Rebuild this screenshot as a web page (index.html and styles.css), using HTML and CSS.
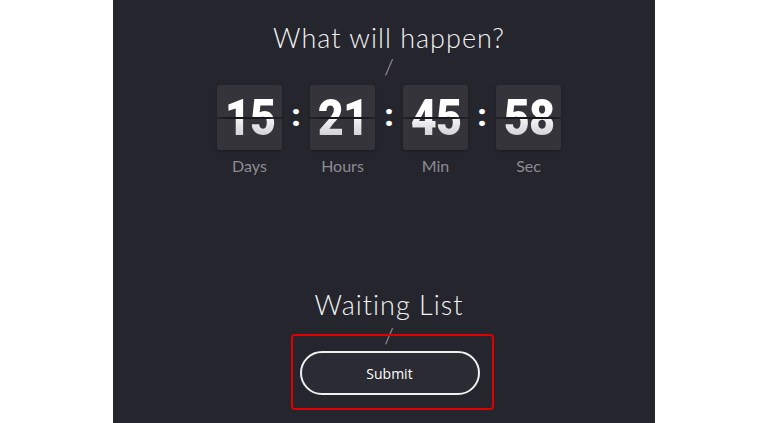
FILE: index.html
```html
<!DOCTYPE html>
<html>
<head>
  <title>Countdown</title>
  <link rel="stylesheet" href="styles.css">
</head>
<body>
  <div class="panel">
    <h1 class="title">What will happen?</h1>
    <div class="slash">/</div>

    <div class="countdown">
      <div class="unit">
        <div class="tile"><span>15</span></div>
        <div class="label">Days</div>
      </div>
      <div class="colon">:</div>
      <div class="unit">
        <div class="tile"><span>21</span></div>
        <div class="label">Hours</div>
      </div>
      <div class="colon">:</div>
      <div class="unit">
        <div class="tile"><span>45</span></div>
        <div class="label">Min</div>
      </div>
      <div class="colon">:</div>
      <div class="unit">
        <div class="tile"><span>58</span></div>
        <div class="label">Sec</div>
      </div>
    </div>

    <h2 class="title waiting">Waiting List</h2>
    <div class="slash small">/</div>

    <div class="highlight">
      <button class="submit-btn" type="button">Submit</button>
    </div>
  </div>
</body>
</html>
```

FILE: styles.css
```css
body {
  margin: 0;
  background-color: #fff;
  font-family: "Open Sans", Arial, sans-serif;
}

.panel {
  width: 542px;
  height: 423px;
  margin-left: 113px;
  background-color: #25252d;
  display: flex;
  flex-direction: column;
  align-items: center;
  box-sizing: border-box;
  padding-top: 22px;
  padding-left: 10px;
}

.title {
  margin: 0;
  color: #f2f2f2;
  font-family: "Lato", sans-serif;
  font-weight: 300;
  font-size: 27px;
  line-height: 32px;
  letter-spacing: 1px;
}

.slash {
  color: #b4b4b8;
  font-family: "Lato", sans-serif;
  font-weight: 300;
  font-size: 22px;
  line-height: 22px;
  height: 22px;
  margin-top: 2px;
}

.countdown {
  display: flex;
  align-items: flex-start;
  margin-top: 7px;
}

.unit {
  display: flex;
  flex-direction: column;
  align-items: center;
}

.tile {
  width: 65px;
  height: 65px;
  background-color: #34343a;
  border-radius: 3px;
  position: relative;
  display: flex;
  align-items: center;
  justify-content: center;
  box-shadow: 0 1px 3px rgba(0, 0, 0, 0.3);
}

.tile::after {
  content: "";
  position: absolute;
  left: 0;
  right: 0;
  top: 32px;
  height: 2px;
  background: linear-gradient(to right, rgba(20, 20, 24, 0.5), #18181c 20%, #18181c 80%, rgba(20, 20, 24, 0.5));
}

.tile span {
  font-family: "Roboto", sans-serif;
  font-weight: 900;
  font-size: 50px;
  line-height: 50px;
  letter-spacing: -1px;
  display: inline-block;
  transform: scaleX(0.9);
  background: linear-gradient(to bottom, #ffffff 40%, #c4c4c8 100%);
  -webkit-background-clip: text;
  background-clip: text;
  color: transparent;
}

.label {
  margin-top: 5px;
  color: #8c8c92;
  font-family: "Lato", sans-serif;
  font-size: 16px;
  line-height: 22px;
}

.colon {
  width: 28px;
  height: 65px;
  display: flex;
  align-items: center;
  justify-content: center;
  color: #fff;
  font-family: "Roboto", sans-serif;
  font-weight: 900;
  font-size: 32px;
  padding-bottom: 6px;
  box-sizing: border-box;
}

.waiting {
  margin-top: 112px;
}

.slash.small {
  margin-top: 4px;
  height: 18px;
}

.highlight {
  border: 2px solid #e00000;
  border-radius: 4px;
  padding: 15px 12px 13px 7px;
  margin-top: -9px;
  margin-left: 6px;
}

.submit-btn {
  width: 180px;
  height: 44px;
  border: 2px solid #f0f0f0;
  border-radius: 22px;
  background-color: #2b2b33;
  color: #fff;
  font-family: "Open Sans", sans-serif;
  font-size: 14px;
  cursor: pointer;
}
```
